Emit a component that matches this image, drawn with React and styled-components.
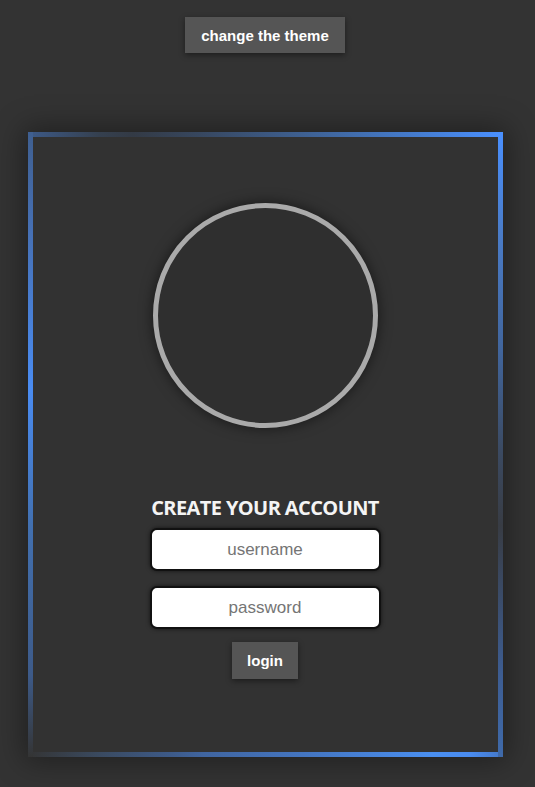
import React from "react";
import styled, { createGlobalStyle } from "styled-components";

const GlobalStyle = createGlobalStyle`
  html, body {
    margin: 0;
    padding: 0;
    background: #333333;
  }
  body {
    font-family: "Liberation Sans", Arial, sans-serif;
  }
`;

const Page = styled.div`
  width: 530px;
  padding-top: 17px;
  padding-bottom: 30px;
  display: flex;
  flex-direction: column;
  align-items: center;
`;

const ThemeButton = styled.button`
  height: 36px;
  padding: 0 16px;
  border: none;
  background: #555555;
  color: #ffffff;
  font-family: "Liberation Sans", Arial, sans-serif;
  font-weight: 700;
  font-size: 15px;
  box-shadow: 0 2px 6px rgba(0, 0, 0, 0.45);
  cursor: pointer;
`;

const Card = styled.div`
  margin-top: 79px;
  width: 475px;
  height: 625px;
  box-sizing: border-box;
  border: 5px solid transparent;
  padding-top: 66px;
  display: flex;
  flex-direction: column;
  align-items: center;
  background:
    linear-gradient(180deg, #3f5f90 0%, #4670b4 16%, #4a8cf2 41%, #4270b0 63%, #3d5a88 87%, #343434 100%) left top / 5px 100% no-repeat border-box,
    linear-gradient(180deg, #4a90ff 0%, #4a7cc8 16%, #41659c 35%, #3b4a62 51%, #383c44 63%, #3d5d92 87%, #3f6aaa 100%) right top / 5px 100% no-repeat border-box,
    linear-gradient(90deg, #3d5a88 0%, #35404f 15%, #333a45 22%, #37475f 36%, #3e5f8f 57%, #4478c5 78%, #4a90ff 100%) left top / 100% 5px no-repeat border-box,
    linear-gradient(90deg, #343434 0%, #3a4a60 15%, #3d5a88 30%, #4065a0 37%, #4475c0 58%, #4a8ff0 85%, #4a8cf0 93%, #4478c8 100%) left bottom / 100% 5px no-repeat border-box,
    #323232;
  box-shadow: 0 0 28px 4px rgba(0, 0, 0, 0.38);
`;

const Avatar = styled.div`
  width: 225px;
  height: 225px;
  box-sizing: border-box;
  border-radius: 50%;
  border: 5px solid #aaaaaa;
  background: #2f2f2f;
  box-shadow: 0 0 14px rgba(0, 0, 0, 0.55);
`;

const Title = styled.h2`
  margin: 66px 0 0;
  font-family: "Open Sans", "Noto Sans", sans-serif;
  font-weight: 700;
  font-size: 20px;
  letter-spacing: -0.6px;
  color: #f4f4f4;
  line-height: 28px;
`;

const Field = styled.input`
  width: 231px;
  height: 43px;
  box-sizing: border-box;
  margin-top: ${(p) => p.$gap}px;
  border: 2px solid #111111;
  border-radius: 7px;
  background: #ffffff;
  box-shadow: 0 0 4px rgba(0, 0, 0, 0.6);
  text-align: center;
  font-family: "Liberation Sans", Arial, sans-serif;
  font-size: 17px;
  color: #222;
  outline: none;
  &::placeholder {
    color: #757575;
  }
`;

const LoginButton = styled.button`
  margin-top: 13px;
  height: 37px;
  padding: 0 15px;
  border: none;
  background: #555555;
  color: #ffffff;
  font-family: "Liberation Sans", Arial, sans-serif;
  font-weight: 700;
  font-size: 15px;
  box-shadow: 0 2px 6px rgba(0, 0, 0, 0.45);
  cursor: pointer;
`;

export default function App() {
  return (
    <>
      <GlobalStyle />
      <Page>
        <ThemeButton>change the theme</ThemeButton>
        <Card>
          <Avatar />
          <Title>CREATE YOUR ACCOUNT</Title>
          <Field $gap={6} type="text" placeholder="username" />
          <Field $gap={15} type="password" placeholder="password" />
          <LoginButton>login</LoginButton>
        </Card>
      </Page>
    </>
  );
}
